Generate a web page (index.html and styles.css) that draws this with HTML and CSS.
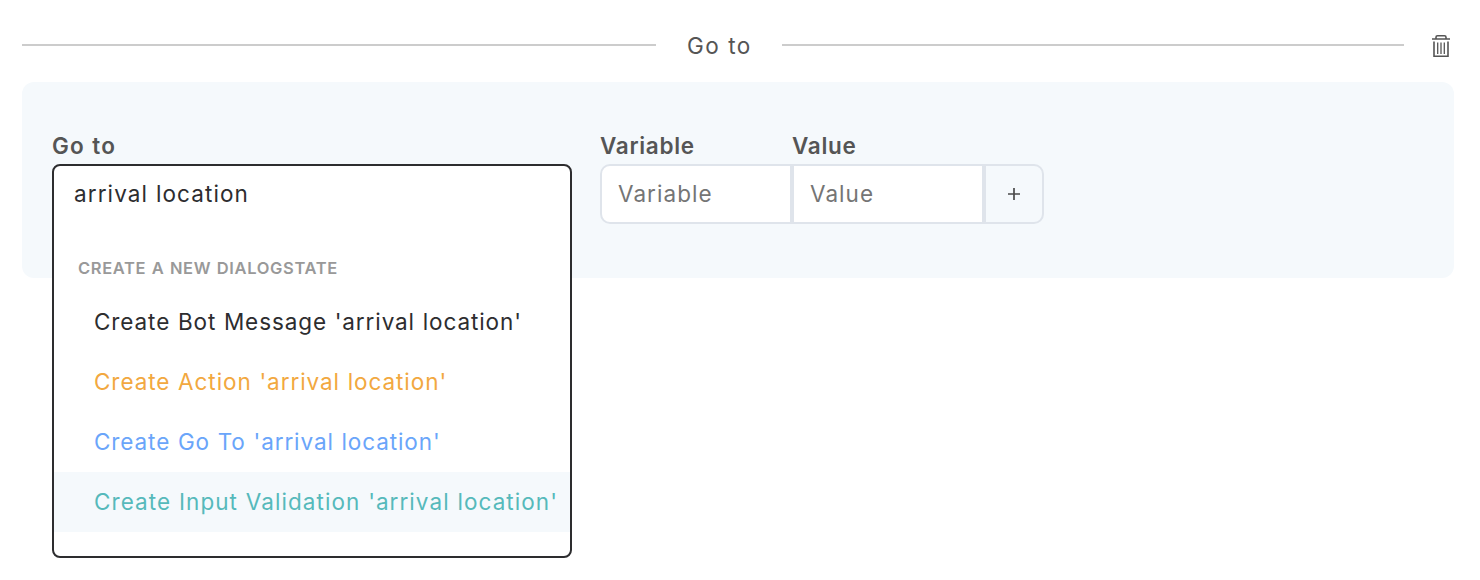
FILE: index.html
```html
<!DOCTYPE html>
<html lang="en">
<head>
<meta charset="utf-8">
<title>Go to</title>
<link rel="stylesheet" href="styles.css">
</head>
<body>
<header class="divider">
  <span class="rule rule-left"></span>
  <span class="title">Go to</span>
  <span class="rule rule-right"></span>
  <svg class="trash" width="18" height="24" viewBox="0 0 18 24" fill="none" stroke="#555" stroke-width="1.6">
    <path d="M0 5H18M4 5V3.2Q4 1.7 5.5 1.7H12.5Q14 1.7 14 3.2V5" />
    <path d="M2 7.6V22.2H16V7.6" />
    <path d="M5.7 8.6V20M9 8.6V20M12.3 8.6V20" stroke-width="1.3" />
  </svg>
</header>
<main class="panel">
  <section class="field goto">
    <div class="label label-goto">Go to</div>
    <div class="combo">
      <div class="query">arrival location</div>
      <div class="group">CREATE A NEW DIALOGSTATE</div>
      <div class="option message">Create Bot Message 'arrival location'</div>
      <div class="option action">Create Action 'arrival location'</div>
      <div class="option jump">Create Go To 'arrival location'</div>
      <div class="option validation">Create Input Validation 'arrival location'</div>
    </div>
  </section>
  <section class="field">
    <div class="label">Variable</div>
    <div class="cell first">Variable</div>
  </section>
  <section class="field">
    <div class="label">Value</div>
    <div class="cell">Value</div>
  </section>
  <button class="add" aria-label="Add"><svg width="12" height="12" viewBox="0 0 12 12"><path d="M0 6H12M6 0V12" stroke="#4a4a4a" stroke-width="1.7"/></svg></button>
</main>
</body>
</html>
```
FILE: styles.css
```css
* { box-sizing: border-box; }
body {
  margin: 0;
  min-height: 580px;
  padding: 22px 26px 0 22px;
  background: #fff;
  color: #555;
  font: 22.5px/48px Inter, "Liberation Sans", sans-serif;
  letter-spacing: 0.9px;
  word-spacing: 0.5px;
  white-space: nowrap;
}
.divider { display: flex; align-items: center; height: 48px; }
.rule { height: 2px; background: #ccc; margin-bottom: 2px; }
.rule-left { width: 634px; }
.rule-right { width: 622px; }
.title { width: 126px; padding-left: 31px; letter-spacing: 1.4px; }
.trash { margin-left: 28px; }
.panel {
  display: flex;
  align-items: flex-start;
  height: 196px;
  margin-top: 12px;
  padding: 50px 30px 0;
  border-radius: 12px;
  background: #f5f9fc;
}
.field { width: 192px; }
.goto { width: 520px; margin-right: 28px; }
.label { height: 32px; line-height: 28px; font-weight: 600; letter-spacing: 0.7px; }
.label-goto { letter-spacing: 1.2px; }
.combo {
  height: 394px;
  border: 2px solid #2d2d2f;
  border-radius: 8px;
  background: #fff;
  color: #2d2d2f;
}
.query { height: 56px; padding-left: 20px; line-height: 56px; letter-spacing: 1.1px; }
.group {
  height: 70px;
  padding: 16px 0 0 24px;
  color: #999;
  font-size: 16.5px;
  font-weight: 600;
  letter-spacing: 0.65px;
  word-spacing: 0.7px;
  line-height: 60px;
}
.option { height: 60px; padding-left: 40px; line-height: 60px; }
.action { color: #f2a840; letter-spacing: 0.93px; }
.jump { color: #6aa5fa; }
.validation { background: #f5f9fc; color: #56b9bb; letter-spacing: 1.05px; }
.cell {
  height: 60px;
  padding-left: 16px;
  border: 2px solid #dfe4eb;
  background: #fff;
  color: #757575;
  line-height: 56px;
  letter-spacing: 1.05px;
}
.first { border-radius: 10px 0 0 10px; }
.add {
  display: grid;
  place-items: center;
  width: 60px;
  height: 60px;
  margin-top: 32px;
  padding: 0;
  border: 2px solid #dfe4eb;
  border-radius: 0 10px 10px 0;
  background: #f5f9fc;
}
```
